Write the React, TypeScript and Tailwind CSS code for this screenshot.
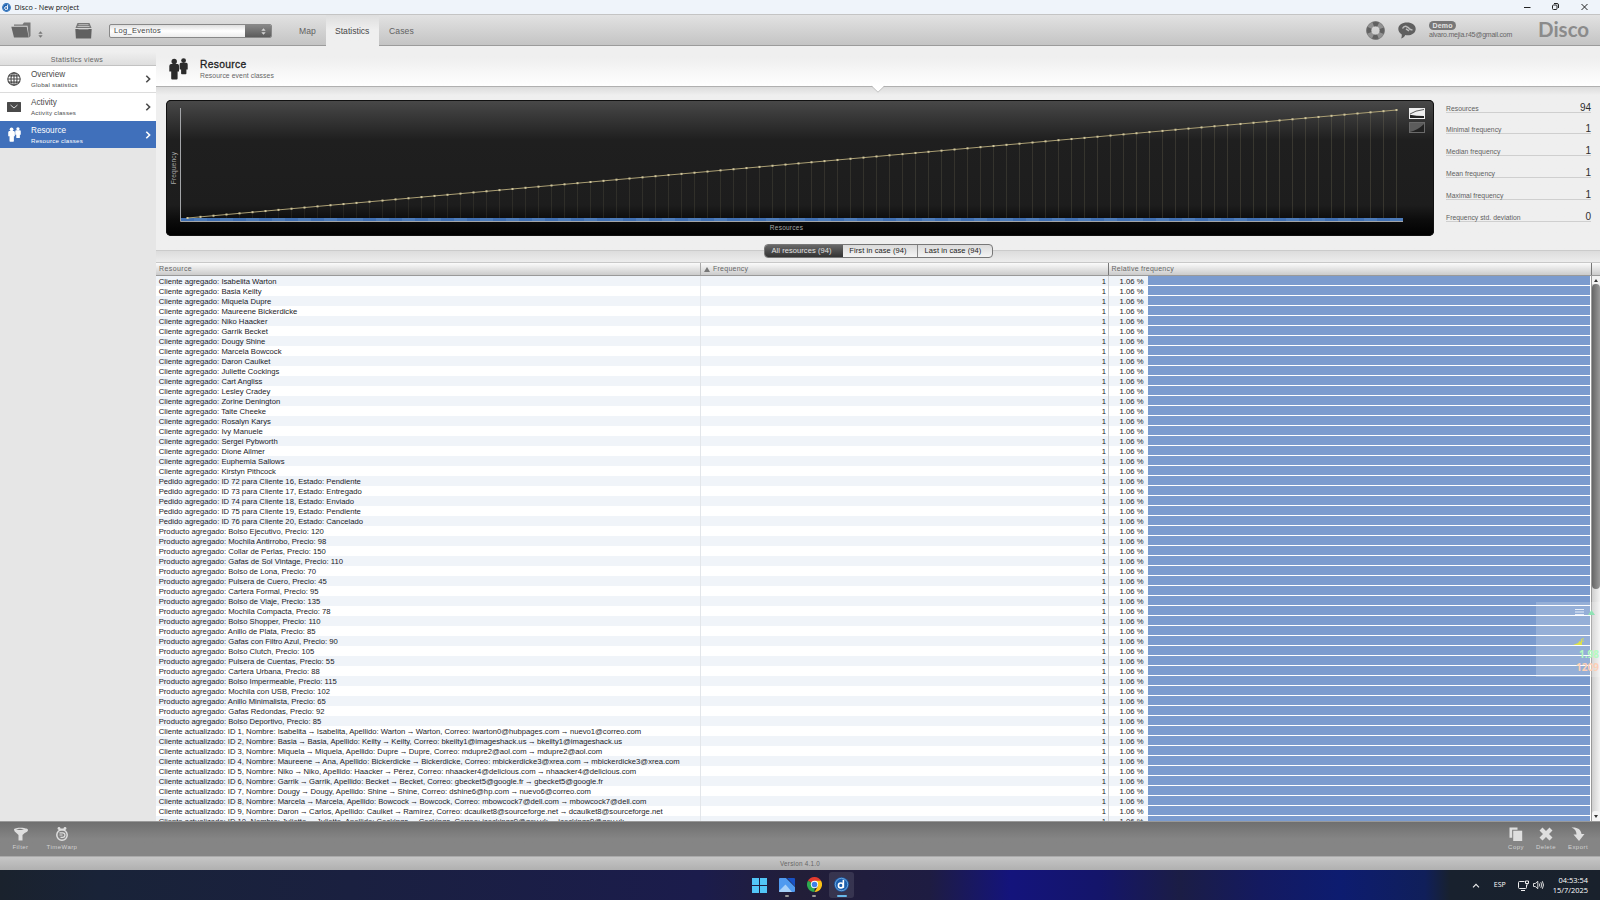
import React from "react";

const rows: string[] = [
  ...[
    "Isabelita Warton", "Basia Keilty", "Miquela Dupre", "Maureene Bickerdicke", "Niko Haacker",
    "Garrik Becket", "Dougy Shine", "Marcela Bowcock", "Daron Caulket", "Juliette Cockings",
    "Cart Angliss", "Lesley Cradey", "Zorine Denington", "Taite Cheeke", "Rosalyn Karys",
    "Ivy Manuele", "Sergei Pybworth", "Dione Ailmer", "Euphemia Sallows", "Kirstyn Pithcock",
  ].map((n) => `Cliente agregado: ${n}`),
  "Pedido agregado: ID 72 para Cliente 16, Estado: Pendiente",
  "Pedido agregado: ID 73 para Cliente 17, Estado: Entregado",
  "Pedido agregado: ID 74 para Cliente 18, Estado: Enviado",
  "Pedido agregado: ID 75 para Cliente 19, Estado: Pendiente",
  "Pedido agregado: ID 76 para Cliente 20, Estado: Cancelado",
  ...([
    ["Bolso Ejecutivo", 120], ["Mochila Antirrobo", 98], ["Collar de Perlas", 150],
    ["Gafas de Sol Vintage", 110], ["Bolso de Lona", 70], ["Pulsera de Cuero", 45],
    ["Cartera Formal", 95], ["Bolso de Viaje", 135], ["Mochila Compacta", 78],
    ["Bolso Shopper", 110], ["Anillo de Plata", 85], ["Gafas con Filtro Azul", 90],
    ["Bolso Clutch", 105], ["Pulsera de Cuentas", 55], ["Cartera Urbana", 88],
    ["Bolso Impermeable", 115], ["Mochila con USB", 102], ["Anillo Minimalista", 65],
    ["Gafas Redondas", 92], ["Bolso Deportivo", 85],
  ] as [string, number][]).map(([n, p]) => `Producto agregado: ${n}, Precio: ${p}`),
  "Cliente actualizado: ID 1, Nombre: Isabelita → Isabelita, Apellido: Warton → Warton, Correo: iwarton0@hubpages.com → nuevo1@correo.com",
  "Cliente actualizado: ID 2, Nombre: Basia → Basia, Apellido: Keilty → Keilty, Correo: bkeilty1@imageshack.us → bkeilty1@imageshack.us",
  "Cliente actualizado: ID 3, Nombre: Miquela → Miquela, Apellido: Dupre → Dupre, Correo: mdupre2@aol.com → mdupre2@aol.com",
  "Cliente actualizado: ID 4, Nombre: Maureene → Ana, Apellido: Bickerdicke → Bickerdicke, Correo: mbickerdicke3@xrea.com → mbickerdicke3@xrea.com",
  "Cliente actualizado: ID 5, Nombre: Niko → Niko, Apellido: Haacker → Pérez, Correo: nhaacker4@delicious.com → nhaacker4@delicious.com",
  "Cliente actualizado: ID 6, Nombre: Garrik → Garrik, Apellido: Becket → Becket, Correo: gbecket5@google.fr → gbecket5@google.fr",
  "Cliente actualizado: ID 7, Nombre: Dougy → Dougy, Apellido: Shine → Shine, Correo: dshine6@hp.com → nuevo6@correo.com",
  "Cliente actualizado: ID 8, Nombre: Marcela → Marcela, Apellido: Bowcock → Bowcock, Correo: mbowcock7@dell.com → mbowcock7@dell.com",
  "Cliente actualizado: ID 9, Nombre: Daron → Carlos, Apellido: Caulket → Ramírez, Correo: dcaulket8@sourceforge.net → dcaulket8@sourceforge.net",
  "Cliente actualizado: ID 10, Nombre: Juliette → Juliette, Apellido: Cockings → Cockings, Correo: jcockings9@gov.uk → jcockings9@gov.uk",
];

const stats: [string, string][] = [
  ["Resources", "94"],
  ["Minimal frequency", "1"],
  ["Median frequency", "1"],
  ["Mean frequency", "1"],
  ["Maximal frequency", "1"],
  ["Frequency std. deviation", "0"],
];

function RowText({ text }: { text: string }) {
  return (
    <>
      {text.split("→").map((part, i) => (
        <React.Fragment key={i}>
          {i > 0 && <span className="-mx-[0.700px]">→</span>}
          {part}
        </React.Fragment>
      ))}
    </>
  );
}

function People({ className }: { className: string }) {
  return (
    <svg viewBox="0 0 19 22" className={className} fill="currentColor">
      <circle cx="5.2" cy="3.4" r="2.7" />
      <path d="M1.8 6h6.800q1.400.3 1.400 1.800v5.800H8.600V20.500q0 1-1 1H3.200q-1 0-1-1v-6.900H.300V8q0-1.700 1.500-2z" />
      <circle cx="14.600" cy="2.600" r="2.400" />
      <path d="M12 4.700h5.300q1.400.2 1.400 1.700v5.100h-1.300v4q0 .8-.8.800h-3.700q-.8 0-.8-.8v-4H10.600V6.400q0-1.500 1.400-1.700z" />
    </svg>
  );
}

function Globe() {
  return (
    <svg viewBox="0 0 14 14" className="size-[14px]" fill="none" stroke="#4a4a4a" strokeWidth="1.100">
      <circle cx="7" cy="7" r="6.200" />
      <ellipse cx="7" cy="7" rx="3" ry="6.200" />
      <path d="M7 .8v12.400M.8 7h12.400M1.900 3.900h10.200M1.900 10.100h10.200" />
    </svg>
  );
}

function Mail() {
  return (
    <svg viewBox="0 0 14 10" className="h-[10px] w-[14px]">
      <rect width="14" height="10" rx=".5" fill="#4a4a4a" />
      <path d="M3.500 3l3.500 3 3.500-3" fill="none" stroke="#e8e8e8" strokeWidth=".9" />
    </svg>
  );
}

function UpDown({ color, className }: { color: string; className: string }) {
  return (
    <svg viewBox="0 0 6 8" className={className} fill={color}>
      <path d="M3 0l2.600 3.200H.4zM3 8L.4 4.800h5.200z" />
    </svg>
  );
}

function DiscoLogo({ className }: { className: string }) {
  return (
    <svg viewBox="0 0 16 16" className={className}>
      <circle cx="8" cy="8" r="7.800" fill="#1c5fae" />
      <circle cx="8" cy="8" r="6.600" fill="none" stroke="#8ec4ee" strokeWidth=".7" />
      <circle cx="7.300" cy="9" r="2.600" fill="none" stroke="#fff" strokeWidth="1.700" />
      <path d="M10 3v8.500" stroke="#fff" strokeWidth="1.700" />
    </svg>
  );
}

function SideItem({ icon, title, sub, className }: { icon: React.ReactNode; title: string; sub: string; className: string }) {
  return (
    <div className={`flex items-center ${className}`}>
      <div className="flex w-[31px] shrink-0 justify-center pr-[3px]">{icon}</div>
      <div className="flex-1">
        <div className="pt-[1px] text-[8.200px] leading-[10px]">{title}</div>
        <div className="text-[6.200px] leading-[9px] tracking-[0.200px]">{sub}</div>
      </div>
      <svg viewBox="0 0 6 8" className="mr-[5px] h-[8px] w-[6px]" fill="none" stroke="currentColor" strokeWidth="1.600">
        <path d="M1.300 .8l3.300 3.200-3.300 3.200" />
      </svg>
    </div>
  );
}

function Chart() {
  const pts = Array.from({ length: 94 }, (_, i) => ({ x: 21.500 + i * 13, y: 118 - (i * 108) / 93 }));
  return (
    <svg viewBox="0 0 1268 136" className="block h-[136px] w-[1268px]">
      {pts.map((p, i) => (
        <rect key={i} x={p.x - 0.500} y={p.y} width="1" height={118 - p.y} fill="#8d8668" opacity={0.120 + (i / 93) * 0.130} />
      ))}
      {pts.map((p, i) => (
        <rect key={i} x={15 + i * 13} y="118" width="13" height="3" fill={i % 2 ? "#4c7bb9" : "#3f6fb2"} />
      ))}
      <path d="M14.500 8v113.500H1237" fill="none" stroke="#a3a5a8" strokeWidth="1" />
      <path d={`M${pts[0].x} ${pts[0].y}L${pts[93].x} ${pts[93].y}`} stroke="#ab9f74" strokeWidth="1" />
      {pts.map((p, i) => (
        <rect key={i} x={p.x - 1} y={p.y - 1} width="2" height="2" fill="#cfc59c" />
      ))}
      <text x="620.500" y="129.700" textAnchor="middle" fontSize="6.500" letterSpacing=".25" fill="#a8a8a8">Resources</text>
      <text transform="translate(10 68) rotate(-90)" textAnchor="middle" fontSize="6.500" letterSpacing=".2" fill="#a8a8a8">Frequency</text>
      <rect x="1243" y="8" width="16" height="11" fill="#efefef" />
      <path d="M1244 14Q1249 10.500 1258 9.500" stroke="#333" strokeWidth=".8" fill="none" />
      <path d="M1244 14.800q6 1.200 14 1.200v2h-14z" fill="#222" />
      <rect x="1243.500" y="22.500" width="15" height="10" fill="#5c5c5c" stroke="#6a6a6a" />
      <path d="M1244 32q8-2 14-8v8z" fill="#222" />
    </svg>
  );
}

function ToolButton({ label, children, className }: { label: string; children: React.ReactNode; className: string }) {
  return (
    <div className={`flex flex-col items-center ${className}`}>
      <svg viewBox="0 0 14 14" className="size-[14px]" fill="#dedede">{children}</svg>
      <div className="mt-[1.500px] whitespace-nowrap text-[6px] leading-[8px] tracking-[0.450px] text-[#d2d2d2]">{label}</div>
    </div>
  );
}

export default function App() {
  return (
    <div className="relative flex h-[900px] w-[1600px] flex-col overflow-hidden bg-[#efefef] font-['Liberation_Sans',Arial,sans-serif] text-[#333]">
      {/* Window title bar */}
      <div className="flex h-[14px] shrink-0 items-center bg-[#eff4fa] font-['Open_Sans','Noto_Sans',sans-serif] text-[7.200px] text-[#111]">
        <DiscoLogo className="ml-[2px] size-[9px]" />
        <span className="ml-[3.500px] flex-1 leading-[14px]">Disco - New project</span>
        <svg viewBox="0 0 66 10" className="mr-[11px] h-[10px] w-[66px]" fill="none" stroke="#222" strokeWidth="1">
          <path d="M1 5.500h6.500M58.500 2l6 6M64.500 2l-6 6" />
          <rect x="29.500" y="3" width="4.500" height="4.500" rx="1" />
          <path d="M31 1.500h3q1.500 0 1.500 1.500v3" />
        </svg>
      </div>

      {/* Application toolbar */}
      <div className="flex h-[32px] shrink-0 items-stretch border-t border-b border-t-[#c4c4c4] border-b-[#9b9b9b] bg-linear-to-b from-[#e2e2e2] to-[#c4c4c4]">
        <div className="flex w-[109px] items-center">
          <svg viewBox="0 0 20 16" className="ml-[11px] h-[16px] w-[20px]" fill="#666">
            <path d="M3 4V2.500h8.500L13 .5h6.500V14l-1.500 1.500L16.500 3.800H3z" fill="#777" />
            <path d="M.3 4.800h15.400l2 10.700H3z" />
          </svg>
          <UpDown color="#777" className="mt-[8px] ml-[6.500px] h-[7px] w-[5px]" />
          <svg viewBox="0 0 17 17" className="ml-[32.500px] h-[17px] w-[17px]">
            <path d="M2.500 1h12l2 5h-16z" fill="#777" />
            <path d="M3.500 2.700h10M2.500 4.500h12" stroke="#c5c5c5" strokeWidth=".9" />
            <path d="M.3 7h16.400l-.6 9.500H.9z" fill="#606060" />
            <path d="M3.500 7.500h10" stroke="#888" strokeWidth="1" />
          </svg>
        </div>
        <div className="mt-[9px] flex h-[14px] w-[163px] overflow-hidden rounded-[2px] border border-[#888] bg-linear-to-b from-[#dedede] via-white to-[#ececec]">
          <div className="flex-1 pl-[4px] text-[7.500px] leading-[12px] tracking-[0.300px] text-[#444]">Log_Eventos</div>
          <div className="flex w-[26px] items-center justify-center bg-linear-to-b from-[#888] to-[#5c5c5c] pl-[11px]">
            <UpDown color="#d5d5d5" className="h-[7px] w-[5px]" />
          </div>
        </div>
        <div className="ml-[19px] flex text-[8.600px] leading-[33px] text-[#626262]">
          <div className="w-[35px] pl-[8px]">Map</div>
          <div className="-mb-px w-[53px] bg-linear-to-b from-[#dedede] via-[#efefef] to-[#efefef] pl-[9px] text-[#484848]">Statistics</div>
          <div className="pl-[10px] tracking-[0.100px]">Cases</div>
        </div>
        <div className="ml-auto flex items-center">
          <svg viewBox="0 0 20 20" className="h-[19px] w-[19px]" fill="none">
            <circle cx="10" cy="10" r="7" stroke="#929292" strokeWidth="5" />
            <circle cx="10" cy="10" r="7" stroke="#616161" strokeWidth="5" strokeDasharray="5.500 5.495" strokeDashoffset="2.700" />
            <circle cx="10" cy="10" r="9.400" stroke="#777" strokeWidth=".7" />
          </svg>
          <svg viewBox="0 0 18 17" className="ml-[13px] h-[17px] w-[18px]">
            <path d="M9 .5c5 0 8.700 2.700 8.700 6.400S14 13.300 9.500 13.300c-.8 0-1.500 0-2.200-.2C6.500 15 5 16.200 3 16.500c.8-1.200 1-2.800.6-4.300C1.500 11 .3 9.100.3 6.900.3 3.200 4 .5 9 .5z" fill="#606060" />
            <path d="M4.500 6.500Q6 3.800 8.300 4.500T12 7.300l2.500.8M8 6.800l3 2" stroke="#bdbdbd" strokeWidth="1.500" fill="none" />
          </svg>
          <div className="ml-[13px] w-[97px]">
            <div className="flex h-[9px] w-[27px] items-center justify-center rounded-full bg-[#777] text-[7px] leading-[9px] font-bold tracking-[0.200px] text-[#e4e4e4]">Demo</div>
            <div className="text-[7px] leading-[10px] tracking-[-0.220px] text-[#666]">alvaro.mejia.r45@gmail.com</div>
          </div>
          <div className="ml-[12px] w-[62px] pb-[3px] font-['Lato','Open_Sans',sans-serif] text-[20.500px] leading-[28px] font-bold text-[#8b8b8b]">Disco</div>
        </div>
      </div>

      <div className="flex min-h-0 flex-1">
        {/* Statistics views */}
        <div className="flex w-[156px] shrink-0 flex-col bg-[#e6e6e6]">
          <div className="h-[5px] bg-[#efefef]" />
          <div className="h-[15px] border-b border-[#c2c2c2] bg-linear-to-b from-[#f0f0f0] to-[#dedede] pt-[3px] text-center text-[7px] leading-[12px] tracking-[0.300px] text-[#666]">
            <span className="pr-[2px]">Statistics views</span>
          </div>
          <SideItem icon={<Globe />} title="Overview" sub="Global statistics" className="h-[27px] border-b border-[#dcdcdc] bg-white text-[#4a4a4a]" />
          <SideItem icon={<Mail />} title="Activity" sub="Activity classes" className="h-[28px] bg-white text-[#4a4a4a]" />
          <SideItem icon={<People className="h-[15px] w-[13px]" />} title="Resource" sub="Resource classes" className="h-[27px] bg-[#4070bb] text-white" />
        </div>

        <div className="flex min-w-0 flex-1 flex-col">
          {/* View header */}
          <div className="relative flex h-[41px] shrink-0 border-b border-[#b0b0b0] bg-linear-to-b from-[#efefef] from-30% to-white">
            <People className="mt-[12px] ml-[13px] h-[22px] w-[19px] text-[#2c2c2c]" />
            <div className="ml-[12px] pt-[12px]">
              <div className="text-[10.300px] leading-[13px] tracking-[0.300px] text-[#1d1d1d] [-webkit-text-stroke:0.3px_#1d1d1d]">Resource</div>
              <div className="text-[6.800px] leading-[10px] tracking-[0.080px] text-[#666]">Resource event classes</div>
            </div>
            <svg viewBox="0 0 14 8" className="absolute top-[39px] left-[715px] h-[8px] w-[14px]">
              <path d="M0 0h14v1h-1L7 7 1 1H0z" fill="#fff" />
              <path d="M.8 1.300l6.200 5.900 6.200-5.900" stroke="#b8b8b8" strokeWidth=".8" fill="none" />
            </svg>
          </div>

          {/* Chart and summary */}
          <div className="flex h-[163px] shrink-0 bg-linear-to-b from-[#dcdcdc] to-[#efefef] to-5% pt-[13px] pl-[10px]">
            <div className="h-[136px] w-[1268px] overflow-hidden rounded-[5px] bg-[linear-gradient(to_bottom,#000_0px,#484848_1px,#1f1f1f_40px,#1d1d1d_105px,#0c0c0c_120px,#000_136px)] shadow-[inset_0_0_0_1px_#111]">
              <Chart />
            </div>
            <div className="ml-[12px] w-[145px]">
              {stats.map(([k, v]) => (
                <div key={k} className="flex h-[21.950px] flex-col">
                  <div className="flex h-[12.500px] items-end justify-between border-b border-[#cfcfcf]">
                    <span className="text-[6.800px] leading-[7px] tracking-[0.020px] text-[#5e5e5e]">{k}</span>
                    <span className="text-[10px] leading-[9px] text-[#2e2e2e]">{v}</span>
                  </div>
                </div>
              ))}
            </div>
          </div>

          {/* Scope tabs */}
          <div className="flex h-[12px] shrink-0 items-start justify-center border-t border-[#cbcbcb] bg-linear-to-b from-[#dcdcdc] to-[#ededed]">
            <div className="-mt-[7px] flex h-[14px] overflow-hidden rounded-[4px] border border-[#777] bg-linear-to-b from-[#dadada] to-[#f4f4f4] text-[7.500px] leading-[12px] tracking-[0.080px] text-[#222]">
              <div className="w-[78px] bg-linear-to-b from-[#686868] to-[#333] pr-[4px] text-center text-[#e2e2e2]">All resources (94)</div>
              <div className="w-[75px] border-r border-[#888] pr-[3px] text-center">First in case (94)</div>
              <div className="w-[74px] pr-[3px] text-center">Last in case (94)</div>
            </div>
          </div>

          {/* Table header */}
          <div className="flex h-[14px] shrink-0 border-t border-b border-t-[#c8c8c8] border-b-[#999] bg-linear-to-b from-[#fbfbfb] to-[#cbcbcb] text-[7px] leading-[12px] tracking-[0.250px] text-[#666]">
            <div className="w-[545px] border-r border-[#a9a9a9] pl-[3px] tracking-[0.400px]">Resource</div>
            <div className="flex w-[408px] items-center border-r border-[#777] pl-[3px]">
              <svg viewBox="0 0 6 5" className="mr-[3px] h-[5px] w-[6px]" fill="#777"><path d="M3 0l3 5H0z" /></svg>
              Frequency
            </div>
            <div className="w-[483px] border-r border-[#777] pl-[2.500px]">Relative frequency</div>
          </div>

          {/* Table body */}
          <div className="flex min-h-0 flex-1">
            <div className="h-full w-[1436px] overflow-hidden bg-white text-[7.680px] leading-[11px] text-[#1a1a26]">
              {rows.map((r, i) => (
                <div key={r} className={i % 2 ? "flex h-[10px] bg-white" : "flex h-[10px] bg-[#f0f4f9]"}>
                  <div className="w-[545px] border-r border-[#e3e6ea] pl-[2.700px] whitespace-nowrap"><RowText text={r} /></div>
                  <div className="w-[408px] border-r border-[#cfd2d6] pr-[2px] text-right">1</div>
                  <div className="w-[38.500px] pr-[4px] text-right">1.06 %</div>
                  <div className="h-[10px] w-[442.500px] border-b border-white bg-[#7b9bce]" />
                  <div className="w-[2px] border-r border-[#999] bg-white" />
                </div>
              ))}
            </div>
            <div className="flex w-[8px] flex-col items-center bg-linear-to-r from-[#cfcfcf] to-[#f2f2f2]">
              <div className="flex h-[8px] w-full items-center justify-center bg-[#f2f2f2]">
                <svg viewBox="0 0 4 3" className="h-[3px] w-[4px]" fill="#333"><path d="M2 0l2 3H0z" /></svg>
              </div>
              <div className="h-[305px] w-[8px] rounded-[4px] bg-linear-to-r from-[#666] to-[#999]" />
              <div className="mt-auto flex h-[10px] w-full items-center justify-center rounded-t-[3px] bg-[#f4f4f4]">
                <svg viewBox="0 0 4 3" className="h-[3px] w-[4px]" fill="#333"><path d="M2 3l2-3H0z" /></svg>
              </div>
            </div>
          </div>
        </div>
      </div>

      {/* Action bar */}
      <div className="flex h-[35px] shrink-0 items-start border-t border-[#999] bg-linear-to-b from-[#6f6f6f] to-[#858585] to-50% pt-[5px]">
        <ToolButton label="Filter" className="ml-[5px] w-[31px]">
          <path fillRule="evenodd" d="M0 2.500C0 .3 11 .3 11.500 1.500c2-.5 2.800 1 2.300 2.300-.4 1-1.600 1.500-3.100 2.200L8.500 8v5.500h-4V8L.5 4.200zM2 2.300c2 1 6 1 8 0-2-.8-6-.8-8 0z" />
        </ToolButton>
        <ToolButton label="TimeWarp" className="ml-[10.500px] w-[31px]">
          <circle cx="7" cy="8" r="5.200" fill="none" stroke="#dedede" strokeWidth="1.500" />
          <path d="M4.500 5.800h3.200a2.200 2.200 0 010 4.500H5.500M4.500 8h3" fill="none" stroke="#dedede" strokeWidth="1.200" />
          <circle cx="4" cy="1.500" r="1.400" />
          <circle cx="10" cy="1.500" r="1.400" />
          <path d="M4 1.500h6v2H4z" />
        </ToolButton>
        <ToolButton label="Copy" className="ml-auto w-[30px]">
          <path d="M.5.500h8v2.200H3.200v8H.500z" />
          <path d="M4.200 3.700h9v10.300h-9z" />
        </ToolButton>
        <ToolButton label="Delete" className="w-[30px]">
          <path d="M3.500.5L7 4 10.500.5l3 3L10 7l3.500 3.500-3 3L7 10l-3.500 3.500-3-3L4 7 .5 3.500z" />
        </ToolButton>
        <ToolButton label="Export" className="mr-[5px] w-[34px]">
          <path d="M.5.5C6 0 10 2 10.500 7H13.500L8 14 2.500 7.500h3C5.500 4 4 2 .5.500z" />
        </ToolButton>
      </div>
      <div className="h-[14px] shrink-0 border-t border-[#aaa] bg-linear-to-b from-[#c6c6c6] to-[#b0b0b0] text-center text-[6.300px] leading-[14px] tracking-[0.260px] text-[#666]">
        Version 4.1.0
      </div>

      {/* Windows taskbar */}
      <div className="flex h-[30px] shrink-0 items-center bg-[linear-gradient(to_right,#1a222d_0px,#192338_100px,#1a2040_350px,#1b1c4c_700px,#221e38_800px,#1e1c42_930px,#14147c_1010px,#14156a_1100px,#1b1d45_1180px,#141a60_1260px,#0d1c70_1340px,#101f5a_1425px,#18212e_1450px,#19212c_1600px)] text-white">
        <div className="flex w-[829px] items-center pl-[751.500px]">
          <svg viewBox="0 0 15 15" className="size-[15px] shrink-0" fill="#52c6f7">
            <path d="M0 0h7v7H0zM8 0h7v7H8zM0 8h7v7H0zM8 8h7v7H8z" />
          </svg>
          <div className="ml-[12px] flex h-[30px] w-[16px] shrink-0 flex-col items-center pt-[8px]">
            <svg viewBox="0 0 16 14" className="h-[14px] w-[16px]">
              <path d="M1 0h6l9 9v4q0 1-1 1H1q-1 0-1-1V1q0-1 1-1z" fill="#4f9af0" />
              <path d="M0 13L6.500 6.500 13 14H1q-1 0-1-1z" fill="#a7d1fa" />
              <path d="M8 0h7q1 0 1 1v7.500z" fill="#1851c4" />
            </svg>
            <div className="mt-[3px] h-[2px] w-[4px] rounded-full bg-[#999]" />
          </div>
          <div className="ml-[12px] flex h-[30px] w-[15px] shrink-0 flex-col items-center pt-[7px]">
            <svg viewBox="0 0 16 16" className="size-[15px]">
              <path d="M8 8L1.070 4A8 8 0 0114.930 4z" fill="#e33b2e" />
              <path d="M8 8v8A8 8 0 011.070 4z" fill="#2da94f" />
              <path d="M8 4h6.930A8 8 0 018 16l3.500-6z" fill="#fbc116" />
              <circle cx="8" cy="8" r="3.900" fill="#fff" />
              <circle cx="8" cy="8" r="3" fill="#3f7fe8" />
            </svg>
            <div className="mt-[3px] h-[2px] w-[4px] rounded-full bg-[#999]" />
          </div>
        </div>
        <div className="flex h-[26px] w-[25px] shrink-0 flex-col items-center rounded-[3px] bg-white/10 pt-[5px]">
          <DiscoLogo className="size-[15px]" />
          <div className="mt-[3px] h-[2px] w-[10px] rounded-full bg-[#68b8ea]" />
        </div>
        <div className="ml-auto flex items-center pr-[12px] font-['Open_Sans','Noto_Sans',sans-serif]">
          <svg viewBox="0 0 8 5" className="h-[5px] w-[8px]" fill="none" stroke="#eee" strokeWidth="1.100"><path d="M1 4.300l3-3 3 3" /></svg>
          <span className="ml-[14px] text-[7px]">ESP</span>
          <svg viewBox="0 0 11 11" className="ml-[12px] h-[11px] w-[11px]" fill="none" stroke="#eee" strokeWidth="1">
            <path d="M6.500 1.500H1.500q-1 0-1 1v5q0 1 1 1h6q1 0 1-1V5M3 10.500h4M7.500 1h3v2.500h-3zM9 3.500v2" />
          </svg>
          <svg viewBox="0 0 11 10" className="ml-[4px] h-[10px] w-[11px]" fill="none" stroke="#eee" strokeWidth=".9">
            <path d="M.5 3.500h1.800L4.800 1.300v7.400L2.300 6.500H.5zM6.300 3.500q1 1.500 0 3M7.800 2.200q2 2.800 0 5.600M9.300 1.200q2.500 3.800 0 7.600" />
          </svg>
          <div className="ml-[9px] -mt-px text-right text-[7.450px] leading-[10px]">
            <div>04:53:54</div>
            <div>15/7/2025</div>
          </div>
        </div>
      </div>

      {/* Floating performance widget, partly beyond the screen edge */}
      <div className="absolute top-[602px] left-[1535.500px] h-[75px] w-[65px] overflow-hidden bg-white/20 font-['Open_Sans',sans-serif] font-bold">
        <svg viewBox="0 0 65 75" className="absolute inset-0 h-[75px] w-[65px]">
          <path d="M39 7.500h9M39 10h9M39 12.500h9" stroke="#e6eefa" strokeWidth="1" />
          <path d="M52 13l3.500-5 3.500 5z" fill="#8fe3b4" />
          <path d="M37 43l5-2 1.500-2 1.500 1v-3h1v6z" fill="#dbe04a" />
          <path d="M47 36v5" stroke="#dbe04a" strokeWidth="1.200" strokeDasharray="1.500 1" />
        </svg>
        <div className="pt-[46px] pl-[43.500px] text-[10px] leading-[13px] whitespace-nowrap text-[#b4fbc0]">1.98</div>
        <div className="pl-[40.500px] text-[10px] leading-[12px] whitespace-nowrap text-[#fdd0b6]">1209</div>
      </div>
    </div>
  );
}
